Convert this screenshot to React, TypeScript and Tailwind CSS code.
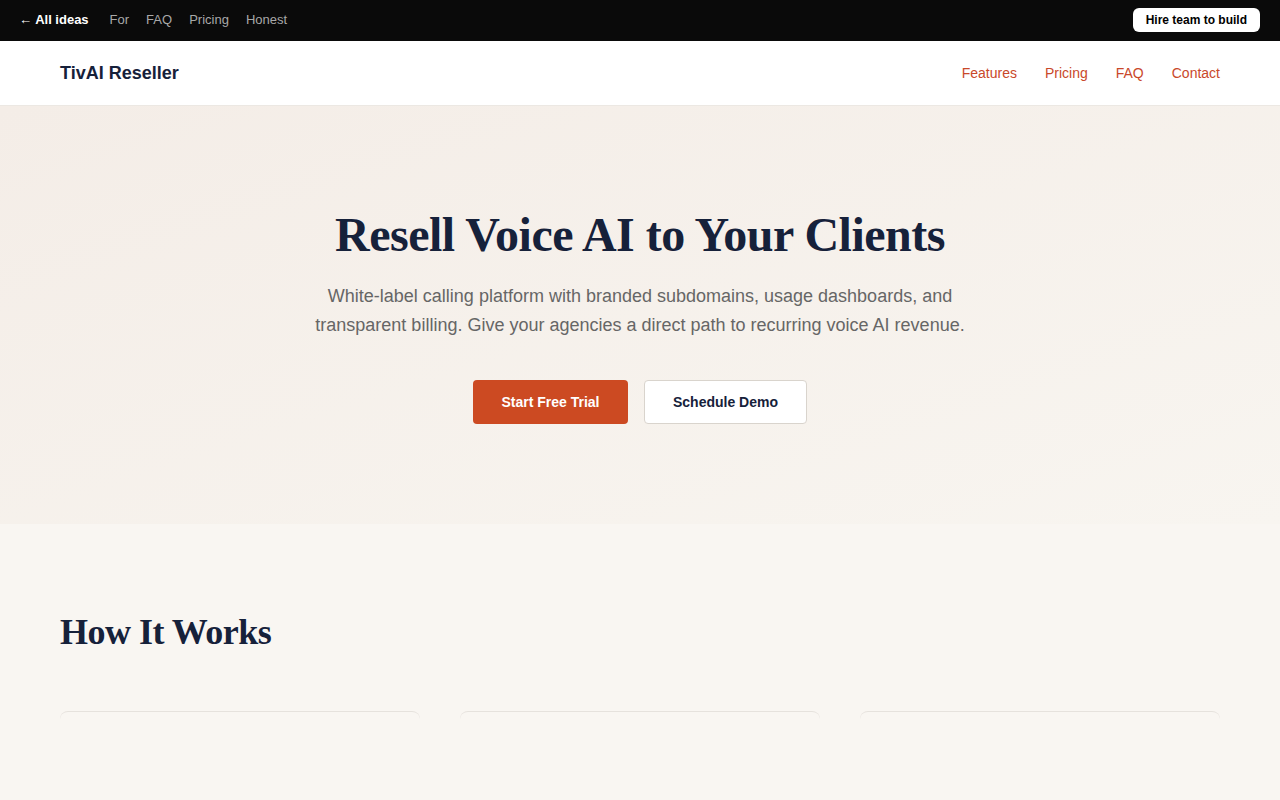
import { useState } from "react"

const topLinks = ["For", "FAQ", "Pricing", "Honest"]
const navLinks = ["Features", "Pricing", "FAQ", "Contact"]
const steps = [1, 2, 3]

function TopBar() {
    return (
        <div className="h-[41px] bg-[#0a0a0a] flex items-center justify-between pl-[19px] pr-5 pb-px text-[13px]">
            <div className="flex items-center gap-[17px]">
                <a className="text-white font-bold mr-1">← All ideas</a>
                {topLinks.map((l) => (
                    <a key={l} className="text-[#a8a8a8]">{l}</a>
                ))}
            </div>
            <a className="bg-white text-black font-bold text-[12px] rounded-md px-[13px] h-6 flex items-center">Hire team to build</a>
        </div>
    )
}

function Nav() {
    return (
        <header className="h-[65px] bg-white border-b border-[#ece8e3] flex items-center justify-between px-[60px]">
            <span className="text-[18px] font-bold text-[#16213a]">TivAI Reseller</span>
            <ul className="flex items-center gap-7 text-[14px] text-[#c9482a]">
                {navLinks.map((l) => (
                    <li key={l}><a>{l}</a></li>
                ))}
            </ul>
        </header>
    )
}

export default function App() {
    const [hover, setHover] = useState(false)

    return (
        <div className="min-h-[800px] bg-[#f9f6f2] font-['Liberation_Sans',Arial,sans-serif]">
            <TopBar />
            <Nav />

            <section className="h-[418px] bg-gradient-to-br from-[#f4ede7] to-[#f8f5f0] flex flex-col items-center pt-[100px]">
                <h1 className="font-['Liberation_Serif',serif] font-bold text-[48px] leading-[58px] tracking-[-0.5px] text-[#16213a]">
                    Resell Voice AI to Your Clients
                </h1>
                <p className="mt-[18px] text-center text-[18px] leading-[29px] text-[#666] w-[660px]">
                    White-label calling platform with branded subdomains, usage dashboards, and transparent billing. Give your agencies a direct path to recurring voice AI revenue.
                </p>
                <div className="mt-[40px] flex gap-4">
                    <button
                        onMouseEnter={() => setHover(true)}
                        onMouseLeave={() => setHover(false)}
                        className={"h-11 w-[155px] rounded text-white font-bold text-[14px] " + (hover ? "bg-[#b53f1c]" : "bg-[#cc4a22]")}
                    >
                        Start Free Trial
                    </button>
                    <button className="h-11 w-[163px] rounded bg-white border border-[#d9d4cd] text-[#16213a] font-bold text-[14px]">
                        Schedule Demo
                    </button>
                </div>
            </section>

            <section className="px-[60px] pt-[86px]">
                <h2 className="font-['Liberation_Serif',serif] font-bold text-[36px] leading-[44px] tracking-[-0.5px] text-[#16213a]">
                    How It Works
                </h2>
                <div className="mt-[57px] grid grid-cols-3 gap-10">
                    {steps.map((s) => (
                        <div key={s} className="h-[90px] rounded-t-lg border-t border-[#e6e2dd]" />
                    ))}
                </div>
            </section>
        </div>
    )
}
